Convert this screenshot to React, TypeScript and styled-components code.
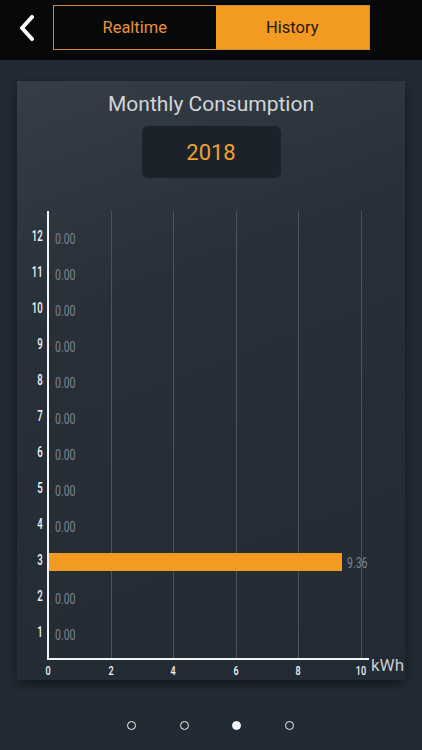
import React from 'react';
import styled, { createGlobalStyle } from 'styled-components';

const GlobalStyle = createGlobalStyle`
  html, body {
    margin: 0;
    padding: 0;
    background: #222a33;
  }
  body {
    font-family: Roboto, "Liberation Sans", sans-serif;
  }
`;

const months = [
  { month: 12, value: 0 },
  { month: 11, value: 0 },
  { month: 10, value: 0 },
  { month: 9, value: 0 },
  { month: 8, value: 0 },
  { month: 7, value: 0 },
  { month: 6, value: 0 },
  { month: 5, value: 0 },
  { month: 4, value: 0 },
  { month: 3, value: 9.36 },
  { month: 2, value: 0 },
  { month: 1, value: 0 },
];

const MAX = 10;
const PLOT_WIDTH = 313;
const ticks = [0, 2, 4, 6, 8, 10];

const Page = styled.div`
  width: 422px;
  height: 750px;
  display: flex;
  flex-direction: column;
  background: linear-gradient(180deg, #29313a 0px, #222a33 60px, #222a33 100%);
  overflow: hidden;
`;

const Header = styled.header`
  height: 60px;
  flex: none;
  background: #07080a;
  display: flex;
  align-items: flex-start;
  padding-top: 5px;
  box-sizing: border-box;
`;

const BackButton = styled.button`
  width: 53px;
  height: 45px;
  padding: 0;
  border: none;
  background: none;
  display: flex;
  align-items: center;
  justify-content: center;
`;

const Segmented = styled.div`
  width: 317px;
  height: 45px;
  display: flex;
  border: 1.5px solid #cf8a36;
  box-sizing: border-box;
`;

const Segment = styled.div<{ $active?: boolean }>`
  flex: ${(p) => (p.$active ? '1' : '0 0 161.5px')};
  display: flex;
  align-items: center;
  justify-content: center;
  font-size: 16.5px;
  background: ${(p) => (p.$active ? '#f39a21' : 'transparent')};
  color: ${(p) => (p.$active ? '#24180b' : '#e8913a')};
`;

const Body = styled.main`
  flex: 1;
  display: flex;
  flex-direction: column;
  align-items: center;
  padding-top: 21px;
`;

const Card = styled.section`
  width: 388px;
  height: 599px;
  flex: none;
  box-sizing: border-box;
  background: linear-gradient(160deg, #353d46 0%, #272f38 35%, #222a33 100%);
  box-shadow: 0 4px 10px rgba(0, 0, 0, 0.45);
  display: flex;
  flex-direction: column;
  align-items: center;
  padding-top: 11px;
  & > * {
    flex: none;
  }
`;

const Title = styled.h1`
  margin: 0;
  font-size: 21px;
  font-weight: 400;
  line-height: 24px;
  color: #d2d6da;
`;

const YearBox = styled.div`
  margin-top: 10px;
  width: 139px;
  height: 52px;
  border-radius: 6px;
  background: #1c2229;
  display: flex;
  align-items: center;
  justify-content: center;
  font-size: 22px;
  color: #f0a032;
`;

const Chart = styled.div`
  margin-top: 33px;
  align-self: stretch;
  display: grid;
  grid-template-columns: 30px auto 1fr;
  grid-template-rows: 449px 19px;
`;

const Narrow = styled.span<{ $k: number; $origin?: string }>`
  display: inline-block;
  transform: scaleX(${(p) => p.$k});
  transform-origin: ${(p) => p.$origin ?? 'left'} center;
  white-space: nowrap;
`;

const YLabels = styled.div`
  display: flex;
  flex-direction: column;
  padding-top: 9px;
`;

const YLabel = styled.div`
  height: 36px;
  display: flex;
  align-items: center;
  justify-content: flex-end;
  padding-right: 4px;
  padding-bottom: 4px;
  box-sizing: border-box;
  font-size: 15.5px;
  font-weight: 500;
  color: #f4f4f4;
`;

const Plot = styled.div`
  position: relative;
  width: ${PLOT_WIDTH + 9}px;
  border-left: 2px solid #f4f4f4;
  border-bottom: 2px solid #f4f4f4;
  box-sizing: border-box;
  padding-top: 9px;
`;

const GridLine = styled.div`
  position: absolute;
  top: 0;
  bottom: 0;
  width: 1px;
  background: #4b535c;
`;

const Row = styled.div`
  position: relative;
  height: 36px;
  display: flex;
  align-items: center;
`;

const Bar = styled.div`
  height: 18px;
  background: #f39a21;
  flex: none;
`;

const Value = styled.span<{ $gap: number }>`
  margin-left: ${(p) => p.$gap}px;
  padding-top: 2px;
  font-size: 14px;
  color: #7f868d;
`;

const Unit = styled.div`
  align-self: end;
  margin-left: 2px;
  margin-bottom: -15px;
  font-size: 17px;
  color: #c8ccd0;
`;

const XLabels = styled.div`
  grid-column: 2;
  position: relative;
`;

const XLabel = styled.span`
  position: absolute;
  top: 2px;
  transform: translateX(-50%);
  font-size: 13.5px;
  font-weight: 500;
  color: #f4f4f4;
`;

const Dots = styled.nav`
  margin-top: 41px;
  display: flex;
  gap: 43.5px;
  padding-right: 1px;
`;

const Dot = styled.span<{ $active?: boolean }>`
  width: 9px;
  height: 9px;
  border-radius: 50%;
  box-sizing: border-box;
  border: 1.6px solid #f4f4f4;
  background: ${(p) => (p.$active ? '#f4f4f4' : 'transparent')};
`;

const scale = (v: number) => (v / MAX) * PLOT_WIDTH;

const App = () => (
  <>
    <GlobalStyle />
    <Page>
      <Header>
        <BackButton aria-label="Back">
          <svg width="16" height="26" viewBox="0 0 16 26">
            <path d="M13 2 L3 13 L13 24" fill="none" stroke="#ffffff" strokeWidth="4" strokeLinecap="round" strokeLinejoin="round" />
          </svg>
        </BackButton>
        <Segmented>
          <Segment>Realtime</Segment>
          <Segment $active>History</Segment>
        </Segmented>
      </Header>
      <Body>
        <Card>
          <Title>Monthly Consumption</Title>
          <YearBox>2018</YearBox>
          <Chart>
            <YLabels>
              {months.map((m) => (
                <YLabel key={m.month}>
                  <Narrow $k={0.62} $origin="right">{m.month}</Narrow>
                </YLabel>
              ))}
            </YLabels>
            <Plot>
              {ticks.slice(1).map((t) => (
                <GridLine key={t} style={{ left: scale(t) - 1 }} />
              ))}
              {months.map((m) => (
                <Row key={m.month}>
                  {m.value > 0 && <Bar style={{ width: scale(m.value) }} />}
                  <Value $gap={m.value > 0 ? 5 : 6}>
                    <Narrow $k={0.75}>{m.value.toFixed(2)}</Narrow>
                  </Value>
                </Row>
              ))}
            </Plot>
            <Unit>kWh</Unit>
            <XLabels>
              {ticks.map((t) => (
                <XLabel key={t} style={{ left: scale(t) + 1 }}>
                  <Narrow $k={0.67} $origin="center">{t}</Narrow>
                </XLabel>
              ))}
            </XLabels>
          </Chart>
        </Card>
        <Dots>
          <Dot />
          <Dot />
          <Dot $active />
          <Dot />
        </Dots>
      </Body>
    </Page>
  </>
);

export default App;
